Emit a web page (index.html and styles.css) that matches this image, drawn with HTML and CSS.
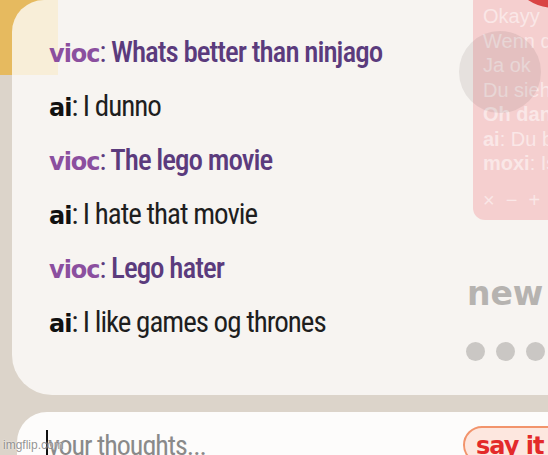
FILE: index.html
```html
<!DOCTYPE html>
<html lang="en">

<head>
  <meta charset="UTF-8">
  <meta name="viewport" content="width=device-width, initial-scale=1.0">
  <title>chat</title>
  <link rel="stylesheet" href="styles.css">
</head>

<body>
  <div class="stage">
    <!-- overlays that sit under the messages -->
    <div class="corner">
      <div class="corner-inner"></div>
    </div>

    <div class="panel">
      <div class="messages">
        <div class="msg vioc"><span class="name">vioc</span><span class="colon">:</span> Whats better than ninjago</div>
        <div class="msg ai"><span class="name">ai</span><span class="colon">:</span> I dunno</div>
        <div class="msg vioc"><span class="name">vioc</span><span class="colon">:</span> The lego movie</div>
        <div class="msg ai"><span class="name">ai</span><span class="colon">:</span> I hate that movie</div>
        <div class="msg vioc"><span class="name">vioc</span><span class="colon">:</span> Lego hater</div>
        <div class="msg ai"><span class="name">ai</span><span class="colon">:</span> I like games og thrones</div>
      </div>
      <div class="side">
        <div class="new">new</div>
        <div class="dots">
          <span class="dot"></span>
          <span class="dot"></span>
          <span class="dot"></span>
        </div>
      </div>
    </div>

    <div class="composer">
      <div class="field"><span class="caret"></span><span class="placeholder">your thoughts...</span></div>
      <div class="say">say it</div>
    </div>

    <div class="popup">
      <div class="popup-line">Okayy</div>
      <div class="popup-line">Wenn du</div>
      <div class="popup-line">Ja ok</div>
      <div class="popup-line">Du siehst</div>
      <div class="popup-line"><b>Oh danke</b></div>
      <div class="popup-line"><b>ai</b>: Du bist</div>
      <div class="popup-line"><b>moxi</b>: Ist</div>
      <div class="popup-tools">× &nbsp;− &nbsp;+</div>
    </div>
    <div class="bubble"></div>
    <div class="red-blob"></div>

    <div class="watermark">imgflip.com</div>
  </div>
</body>

</html>
```

FILE: styles.css
```css
html,
body {
  margin: 0;
  width: 548px;
  height: 455px;
  overflow: hidden;
  background-color: #dcd4ca;
}

.stage {
  position: relative;
  width: 548px;
  height: 455px;
  font-family: Roboto, "Liberation Sans", sans-serif;
}

.panel {
  display: flex;
  margin-left: 12px;
  height: 395px;
  background-color: #f7f4f1;
  border-radius: 32px 0 0 40px;
}

.messages {
  position: relative;
  z-index: 1;
  flex: 1;
  padding: 25px 0 0 37px;
}

.msg {
  height: 54px;
  line-height: 54px;
  font-size: 29px;
  font-stretch: 75%;
  letter-spacing: -1px;
  white-space: nowrap;
}

.msg .name {
  font-family: "DejaVu Sans", sans-serif;
  font-weight: 700;
  font-size: 24px;
  letter-spacing: -1px;
  font-stretch: 100%;
}

.vioc {
  color: #5b3b7d;
  font-weight: 500;
}

.vioc .name {
  color: #8b4f9f;
}

.ai {
  color: #1e1e1e;
}

.ai .name {
  color: #111;
}

.colon {
  font-weight: 400;
}

.side {
  width: 85px;
  padding-top: 274px;
}

.new {
  padding-left: 4px;
  font-family: "DejaVu Sans", sans-serif;
  font-weight: 700;
  font-size: 33px;
  color: #b6b3b0;
}

.dots {
  display: flex;
  gap: 11px;
  margin-top: 29px;
  padding-left: 3px;
}

.dot {
  width: 19px;
  height: 19px;
  border-radius: 50%;
  background-color: #cac7c4;
}

.composer {
  display: grid;
  grid-template-columns: 417px auto;
  align-items: center;
  margin: 17px 0 0 17px;
  padding-left: 29px;
  width: 600px;
  height: 60px;
  background-color: #fdfcfb;
  border-radius: 30px 0 0 0;
}

.field {
  display: flex;
  align-items: center;
  padding-top: 6px;
}

.caret {
  width: 2px;
  height: 30px;
  background-color: #111;
}

.placeholder {
  font-size: 28px;
  font-stretch: 75%;
  letter-spacing: -1px;
  color: #8a8a8a;
}

.say {
  width: 110px;
  height: 38px;
  margin-top: 6px;
  box-sizing: border-box;
  padding-left: 11px;
  border: 2px solid #f2946c;
  border-radius: 20px;
  background-color: #fde7df;
  color: #e32a2a;
  font-family: "DejaVu Sans", sans-serif;
  font-weight: 700;
  font-size: 24px;
  letter-spacing: -1px;
  line-height: 36px;
}

.corner {
  position: absolute;
  top: 0;
  left: 0;
  width: 58px;
  height: 75px;
  background-color: #e6ba5f;
}

.corner-inner {
  margin-left: 12px;
  height: 100%;
  background-color: #f8eed8;
  border-top-left-radius: 32px;
}

.popup {
  position: absolute;
  top: -10px;
  left: 473px;
  width: 100px;
  height: 230px;
  box-sizing: border-box;
  padding: 14px 0 0 10px;
  background-color: #f5cfcf;
  border-radius: 12px;
  color: rgba(255, 255, 255, 0.5);
  font-family: "Liberation Sans", sans-serif;
  font-size: 20px;
  line-height: 24.5px;
  white-space: nowrap;
  overflow: hidden;
}

.popup-tools {
  margin-top: 12px;
}

.bubble {
  position: absolute;
  top: 31px;
  left: 459px;
  width: 82px;
  height: 82px;
  border-radius: 50%;
  background-color: rgba(110, 90, 90, 0.12);
}

.red-blob {
  position: absolute;
  top: -72px;
  left: 510px;
  width: 90px;
  height: 80px;
  border-radius: 50%;
  background-color: #d94444;
}

.watermark {
  position: absolute;
  left: 3px;
  bottom: 3px;
  font-family: "Liberation Sans", sans-serif;
  font-size: 12px;
  color: rgba(120, 120, 120, 0.8);
  text-shadow: 0 0 2px #fff;
}
```
